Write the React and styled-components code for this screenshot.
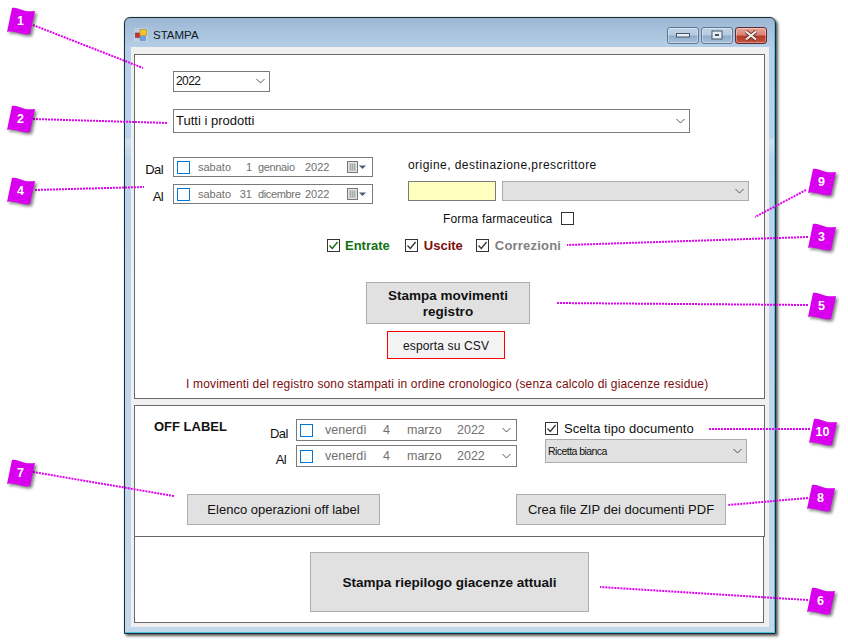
import React from "react";
import styled, { createGlobalStyle, css } from "styled-components";

const Global = createGlobalStyle`
  html, body { margin: 0; padding: 0; background: #fff; }
  body { font-family: "Liberation Sans", Arial, sans-serif; color: #111; }
  * { box-sizing: border-box; }
`;

const Stage = styled.div`
  position: relative;
  width: 848px;
  height: 643px;
  padding: 17px 0 0 124px;
  overflow: hidden;
`;

const Window = styled.div`
  width: 652px;
  height: 617px;
  border: 1px solid #1c2a33;
  border-radius: 6px 6px 0 0;
  background: linear-gradient(180deg, #9db7d3 0, #b6cfe8 30px, #b9d3ec 120px, #cfe0f0 122px, #b9d3ec 140px, #c4d8ec 100%);
  box-shadow: 2px 2px 3px rgba(0, 0, 0, 0.65), 0 0 1px rgba(40, 60, 80, 0.4), inset -1px -1px 0 #4fc4e0;
  padding: 0 6px 6px;
  display: flex;
  flex-direction: column;
`;

const TitleBar = styled.div`
  height: 29px;
  display: flex;
  align-items: center;
  padding: 5px 0 0 3px;
  flex: none;
`;

const Title = styled.span`
  font-size: 11.5px;
  margin-left: 5px;
  color: #101820;
`;

const Caption = styled.div`
  margin-left: auto;
  display: flex;
  gap: 2px;
  padding-right: 2px;
`;

const CaptionButton = styled.div`
  width: 32px;
  height: 17px;
  border: 1px solid ${(p) => (p.$close ? "#5e2a30" : "#5f7a96")};
  border-radius: 3px;
  display: flex;
  align-items: center;
  justify-content: center;
  box-shadow: inset 0 0 0 1px rgba(255, 255, 255, 0.35);
  background: ${(p) =>
    p.$close
      ? "linear-gradient(180deg,#e8a496 0,#d98273 48%,#b73a26 52%,#c4513c 100%)"
      : "linear-gradient(180deg,#c0d3e6 0,#b5cbe1 48%,#8fabc8 52%,#a8c2dc 100%)"};
`;

const Client = styled.div`
  flex: 1;
  background: #f0f0f0;
  padding: 7px 3px 3px;
  display: flex;
  flex-direction: column;
`;

const Panel = styled.section`
  width: ${(p) => p.$w || 631}px;
  height: ${(p) => p.$h}px;
  border: 1px solid #696969;
  background: #fff;
  flex: none;
  position: relative;
  display: flex;
  flex-direction: column;
  margin-top: ${(p) => p.$mt || 0}px;
`;

const Field = styled.div`
  width: ${(p) => p.$w}px;
  height: ${(p) => p.$h}px;
  flex: none;
  border: 1px solid ${(p) => (p.$grey ? "#ababab" : "#7a7a7a")};
  background: ${(p) => (p.$grey ? "#e1e1e1" : "#fff")};
  display: flex;
  align-items: center;
  padding: 0 4px 1px 2px;
  font-size: ${(p) => p.$fs || 12}px;
  letter-spacing: ${(p) => p.$ls || 0}px;
  margin: ${(p) => p.$m || 0};
  color: #111;
`;

const Chevron = styled.svg`
  margin-left: auto;
  flex: none;
`;

const Down = () => (
  <Chevron width="9" height="6" viewBox="0 0 9 6">
    <path d="M0.5 1l4 4 4-4" fill="none" stroke="#555" strokeWidth="1" />
  </Chevron>
);

const Middle = styled.div`
  display: flex;
  margin-top: 24px;
`;

const DateColumn = styled.div`
  display: grid;
  grid-template-columns: 28px 200px;
  column-gap: 10px;
  row-gap: 7px;
  align-content: start;
`;

const SideLabel = styled.span`
  font-size: 13px;
  text-align: right;
  line-height: 14px;
  padding-top: 6px;
  letter-spacing: -0.6px;
`;

const DateBox = styled.div`
  height: ${(p) => p.$h}px;
  width: ${(p) => p.$w}px;
  border: 1px solid #7a7a7a;
  display: flex;
  align-items: center;
  position: relative;
  color: #6f6f6f;
  font-size: ${(p) => p.$fs}px;
  padding: 0 5px 0 3px;
`;

const Tick = styled.span`
  width: 13px;
  height: 13px;
  border: 1px solid #0078d7;
  flex: none;
`;

const DatePart = styled.span`
  flex: none;
  width: ${(p) => p.$w}px;
  margin-left: ${(p) => p.$ml || 0}px;
  text-align: ${(p) => (p.$end ? "right" : "left")};
  white-space: nowrap;
`;

const MonthPart = styled(DatePart)`
  letter-spacing: -0.35px;
`;

const Right = styled.div`
  margin-left: 35px;
  display: flex;
  flex-direction: column;
`;

const OriginLabel = styled.div`
  font-size: 12px;
  line-height: 14px;
  margin-top: 1px;
  letter-spacing: 0.45px;
`;

const OriginRow = styled.div`
  display: flex;
  gap: 6px;
  margin-top: 9px;
`;

const YellowInput = styled.div`
  width: 88px;
  height: 20px;
  background: #ffffc0;
  border: 1px solid #7a7a7a;
`;

const FormaRow = styled.div`
  display: flex;
  align-items: center;
  margin: 10px 0 0 35px;
  font-size: 12px;
  height: 15px;
  letter-spacing: 0.15px;
`;

const Check = styled.span`
  width: 13px;
  height: 13px;
  border: 1px solid #333;
  background: #fff;
  flex: none;
  display: inline-flex;
  align-items: center;
  justify-content: center;
  margin: ${(p) => p.$m || 0};
`;

const CheckMark = ({ color = "#333" }) => (
  <svg width="11" height="11" viewBox="0 0 11 11">
    <path d="M1.5 5.5l2.8 3L9.6 2" fill="none" stroke={color} strokeWidth="1.3" />
  </svg>
);

const FilterRow = styled.div`
  display: flex;
  align-items: center;
  height: 14px;
  margin: 12px 0 0 192px;
`;

const Filter = styled.span`
  font-size: 13px;
  font-weight: 700;
  color: ${(p) => p.$c};
  letter-spacing: ${(p) => p.$ls || 0}px;
  margin: 0 ${(p) => p.$mr}px 0 ${(p) => p.$ml}px;
`;

const GreyButton = styled.div`
  width: ${(p) => p.$w}px;
  height: ${(p) => p.$h}px;
  margin: ${(p) => p.$m || 0};
  flex: none;
  background: #e1e1e1;
  border: 1px solid #adadad;
  display: flex;
  align-items: center;
  justify-content: center;
  text-align: center;
  font-size: ${(p) => p.$fs || 13}px;
  line-height: 16px;
  ${(p) =>
    p.$bold &&
    css`
      font-weight: 700;
      padding-top: 2px;
    `}
`;

const CsvButton = styled.div`
  width: 118px;
  height: 28px;
  margin: 7px 0 0 252px;
  border: 1px solid #f00;
  background: #f3f3f3;
  font-size: 12px;
  letter-spacing: 0.15px;
  padding-top: 1px;
  display: flex;
  align-items: center;
  justify-content: center;
`;

const Note = styled.div`
  margin: 18px 0 0 51px;
  font-size: 12px;
  letter-spacing: 0.16px;
  color: #7a0c0c;
  white-space: nowrap;
`;

const OffTop = styled.div`
  display: flex;
  margin-top: 13px;
  padding-left: 19px;
`;

const OffTitle = styled.div`
  width: 116px;
  font-size: 13px;
  font-weight: 700;
  line-height: 16px;
  flex: none;
`;

const OffDates = styled.div`
  display: grid;
  grid-template-columns: 16px 221px;
  column-gap: 10px;
  row-gap: 4px;
  flex: none;
`;

const OffLabel = styled(SideLabel)`
  padding-top: 8px;
`;

const DocColumn = styled.div`
  margin-left: 28px;
  width: 202px;
  display: flex;
  flex-direction: column;
`;

const DocCheck = styled.div`
  display: flex;
  align-items: center;
  height: 15px;
  margin-top: 2px;
  font-size: 13px;
  letter-spacing: 0.05px;
`;

const OffButtons = styled.div`
  display: flex;
  margin: 27px 0 0 52px;
  gap: 136px;
`;

const Overlay = styled.svg`
  position: absolute;
  inset: 0;
  width: 848px;
  height: 643px;
  pointer-events: none;
`;

const Badge = styled.div`
  position: absolute;
  left: ${(p) => p.$x}px;
  top: ${(p) => p.$y}px;
  width: 28px;
  height: 28px;
  display: flex;
  align-items: center;
  justify-content: center;
  color: #fff;
  font-size: 12.5px;
  font-weight: 700;
  padding-right: 1px;
`;

const BadgeShape = styled.svg`
  position: absolute;
  inset: 0;
  overflow: visible;
  filter: drop-shadow(2px 2px 1.5px rgba(0, 0, 0, 0.5));
`;

const BadgeNumber = styled.span`
  position: relative;
`;

const callouts = [
  { n: 1, x: 7, y: 7, l: [33, 25, 143, 68] },
  { n: 2, x: 7, y: 105, l: [33, 119, 168, 123] },
  { n: 4, x: 7, y: 177, l: [35, 190, 144, 187] },
  { n: 7, x: 7, y: 459, l: [33, 472, 174, 496] },
  { n: 9, x: 808, y: 168, l: [806, 190, 755, 217] },
  { n: 3, x: 808, y: 223, l: [808, 237, 567, 245] },
  { n: 5, x: 808, y: 292, l: [808, 305, 556, 303] },
  { n: 10, x: 809, y: 418, l: [810, 429, 709, 429] },
  { n: 8, x: 807, y: 484, l: [808, 498, 728, 505] },
  { n: 6, x: 807, y: 587, l: [808, 600, 600, 587] },
];

const WindowIcon = () => (
  <svg width="14" height="14" viewBox="0 0 14 14">
    <rect x="0" y="0" width="14" height="14" fill="#c9d6e4" opacity="0.6" />
    <rect x="1.5" y="5" width="4" height="4.5" fill="#c8342c" stroke="#8a2a24" strokeWidth="0.6" />
    <rect x="6" y="1.5" width="6.5" height="6" fill="#f2c52e" stroke="#a98a20" strokeWidth="0.6" />
    <rect x="6" y="8.5" width="5.5" height="4" fill="#6e9fe0" stroke="#5a7fb8" strokeWidth="0.5" />
  </svg>
);

const CalendarIcon = styled.svg`
  position: absolute;
  right: 6px;
  top: 3px;
`;

const Calendar = () => (
  <CalendarIcon width="19" height="13" viewBox="0 0 19 13">
    <rect x="0.5" y="0.5" width="10" height="11" fill="#e4e4e4" stroke="#777" />
    <path d="M2 3h7M2 5h7M2 7h7M2 9h7M3.5 3v6.5M5.5 3v6.5M7.5 3v6.5" stroke="#9a9a9a" strokeWidth="0.7" />
    <path d="M12 4.5h7l-3.5 3.5z" fill="#4a5a78" />
  </CalendarIcon>
);

const SmallDate = ({ day, month, monthMl = 6 }) => (
  <DateBox $w={200} $h={20} $fs={11}>
    <Tick />
    <DatePart $w={40} $ml={8}>sabato</DatePart>
    <DatePart $w={14} $end>{day}</DatePart>
    <MonthPart $w={47} $ml={monthMl}>{month}</MonthPart>
    <DatePart $w={28}>2022</DatePart>
    <Calendar />
  </DateBox>
);

const BigDate = () => (
  <DateBox $w={221} $h={22} $fs={12.5}>
    <Tick />
    <DatePart $w={58} $ml={12}>venerdì</DatePart>
    <DatePart $w={24}>4</DatePart>
    <DatePart $w={50}>marzo</DatePart>
    <DatePart $w={32}>2022</DatePart>
    <Down />
  </DateBox>
);

export default function App() {
  return (
    <Stage>
      <Global />
      <Window>
        <TitleBar>
          <WindowIcon />
          <Title>STAMPA</Title>
          <Caption>
            <CaptionButton>
              <svg width="14" height="6" viewBox="0 0 14 6">
                <rect x="0.5" y="1.5" width="13" height="3.5" fill="#e9eef3" stroke="#45566c" />
              </svg>
            </CaptionButton>
            <CaptionButton>
              <svg width="12" height="10" viewBox="0 0 12 10">
                <rect x="1" y="1" width="10" height="8" fill="#e9eef3" stroke="#45566c" />
                <rect x="4" y="4" width="4" height="2" fill="#45566c" />
              </svg>
            </CaptionButton>
            <CaptionButton $close>
              <svg width="14" height="11" viewBox="0 0 14 11">
                <path d="M2 1.5l10 8M12 1.5l-10 8" stroke="#5b2b2b" strokeWidth="3.6" />
                <path d="M2 1.5l10 8M12 1.5l-10 8" stroke="#f4ece8" strokeWidth="2.2" />
              </svg>
            </CaptionButton>
          </Caption>
        </TitleBar>
        <Client>
          <Panel $h={345}>
            <Field $w={97} $h={21} $m="16px 0 0 38px" $ls={-0.6}>2022<Down /></Field>
            <Field $w={517} $h={24} $m="17px 0 0 38px" $fs={13}>Tutti i prodotti<Down /></Field>
            <Middle>
              <DateColumn>
                <SideLabel>Dal</SideLabel>
                <SmallDate day="1" month="gennaio" />
                <SideLabel>Al</SideLabel>
                <SmallDate day="31" month="dicembre" />
              </DateColumn>
              <Right>
                <OriginLabel>origine, destinazione,prescrittore</OriginLabel>
                <OriginRow>
                  <YellowInput />
                  <Field $w={247} $h={20} $grey><Down /></Field>
                </OriginRow>
                <FormaRow>
                  Forma farmaceutica
                  <Check $m="0 0 0 9px" />
                </FormaRow>
              </Right>
            </Middle>
            <FilterRow>
              <Check><CheckMark color="#0a6a0a" /></Check>
              <Filter $c="#127012" $ml={5} $mr={15}>Entrate</Filter>
              <Check><CheckMark /></Check>
              <Filter $c="#7a0c0c" $ml={6} $mr={13}>Uscite</Filter>
              <Check><CheckMark /></Check>
              <Filter $c="#808080" $ml={6} $mr={0} $ls={0.2}>Correzioni</Filter>
            </FilterRow>
            <GreyButton $w={164} $h={42} $m="30px 0 0 231px" $fs={13.5} $bold>Stampa movimenti<br />registro</GreyButton>
            <CsvButton>esporta su CSV</CsvButton>
            <Note>I movimenti del registro sono stampati in ordine cronologico (senza calcolo di giacenze residue)</Note>
          </Panel>
          <Panel $h={132} $mt={6}>
            <OffTop>
              <OffTitle>OFF LABEL</OffTitle>
              <OffDates>
                <OffLabel>Dal</OffLabel>
                <BigDate />
                <OffLabel>Al</OffLabel>
                <BigDate />
              </OffDates>
              <DocColumn>
                <DocCheck>
                  <Check $m="0 6px 0 0"><CheckMark /></Check>
                  Scelta tipo documento
                </DocCheck>
                <Field $w={202} $h={24} $grey $fs={10.5} $ls={-0.55} $m="3px 0 0">Ricetta bianca<Down /></Field>
              </DocColumn>
            </OffTop>
            <OffButtons>
              <GreyButton $w={193} $h={31}>Elenco operazioni off label</GreyButton>
              <GreyButton $w={210} $h={31}>Crea file ZIP dei documenti PDF</GreyButton>
            </OffButtons>
          </Panel>
          <Panel $w={630} $h={87} $mt={-1}>
            <GreyButton $w={279} $h={60} $m="15px 0 0 175px" $fs={13.5} $bold>Stampa riepilogo giacenze attuali</GreyButton>
          </Panel>
        </Client>
      </Window>
      <Overlay viewBox="0 0 848 643">
        {callouts.map((c) => (
          <line key={c.n} x1={c.l[0]} y1={c.l[1]} x2={c.l[2]} y2={c.l[3]} stroke="#e000f0" strokeWidth="2" strokeDasharray="2 1" />
        ))}
      </Overlay>
      {callouts.map((c) => (
        <Badge key={c.n} $x={c.x} $y={c.y}>
          <BadgeShape width="28" height="28" viewBox="0 0 28 28">
            <path d="M5 1C10 -1 16 6 28 4L23 27C16 29 8 23 0 25Z" fill="#d800ee" />
          </BadgeShape>
          <BadgeNumber>{c.n}</BadgeNumber>
        </Badge>
      ))}
    </Stage>
  );
}
